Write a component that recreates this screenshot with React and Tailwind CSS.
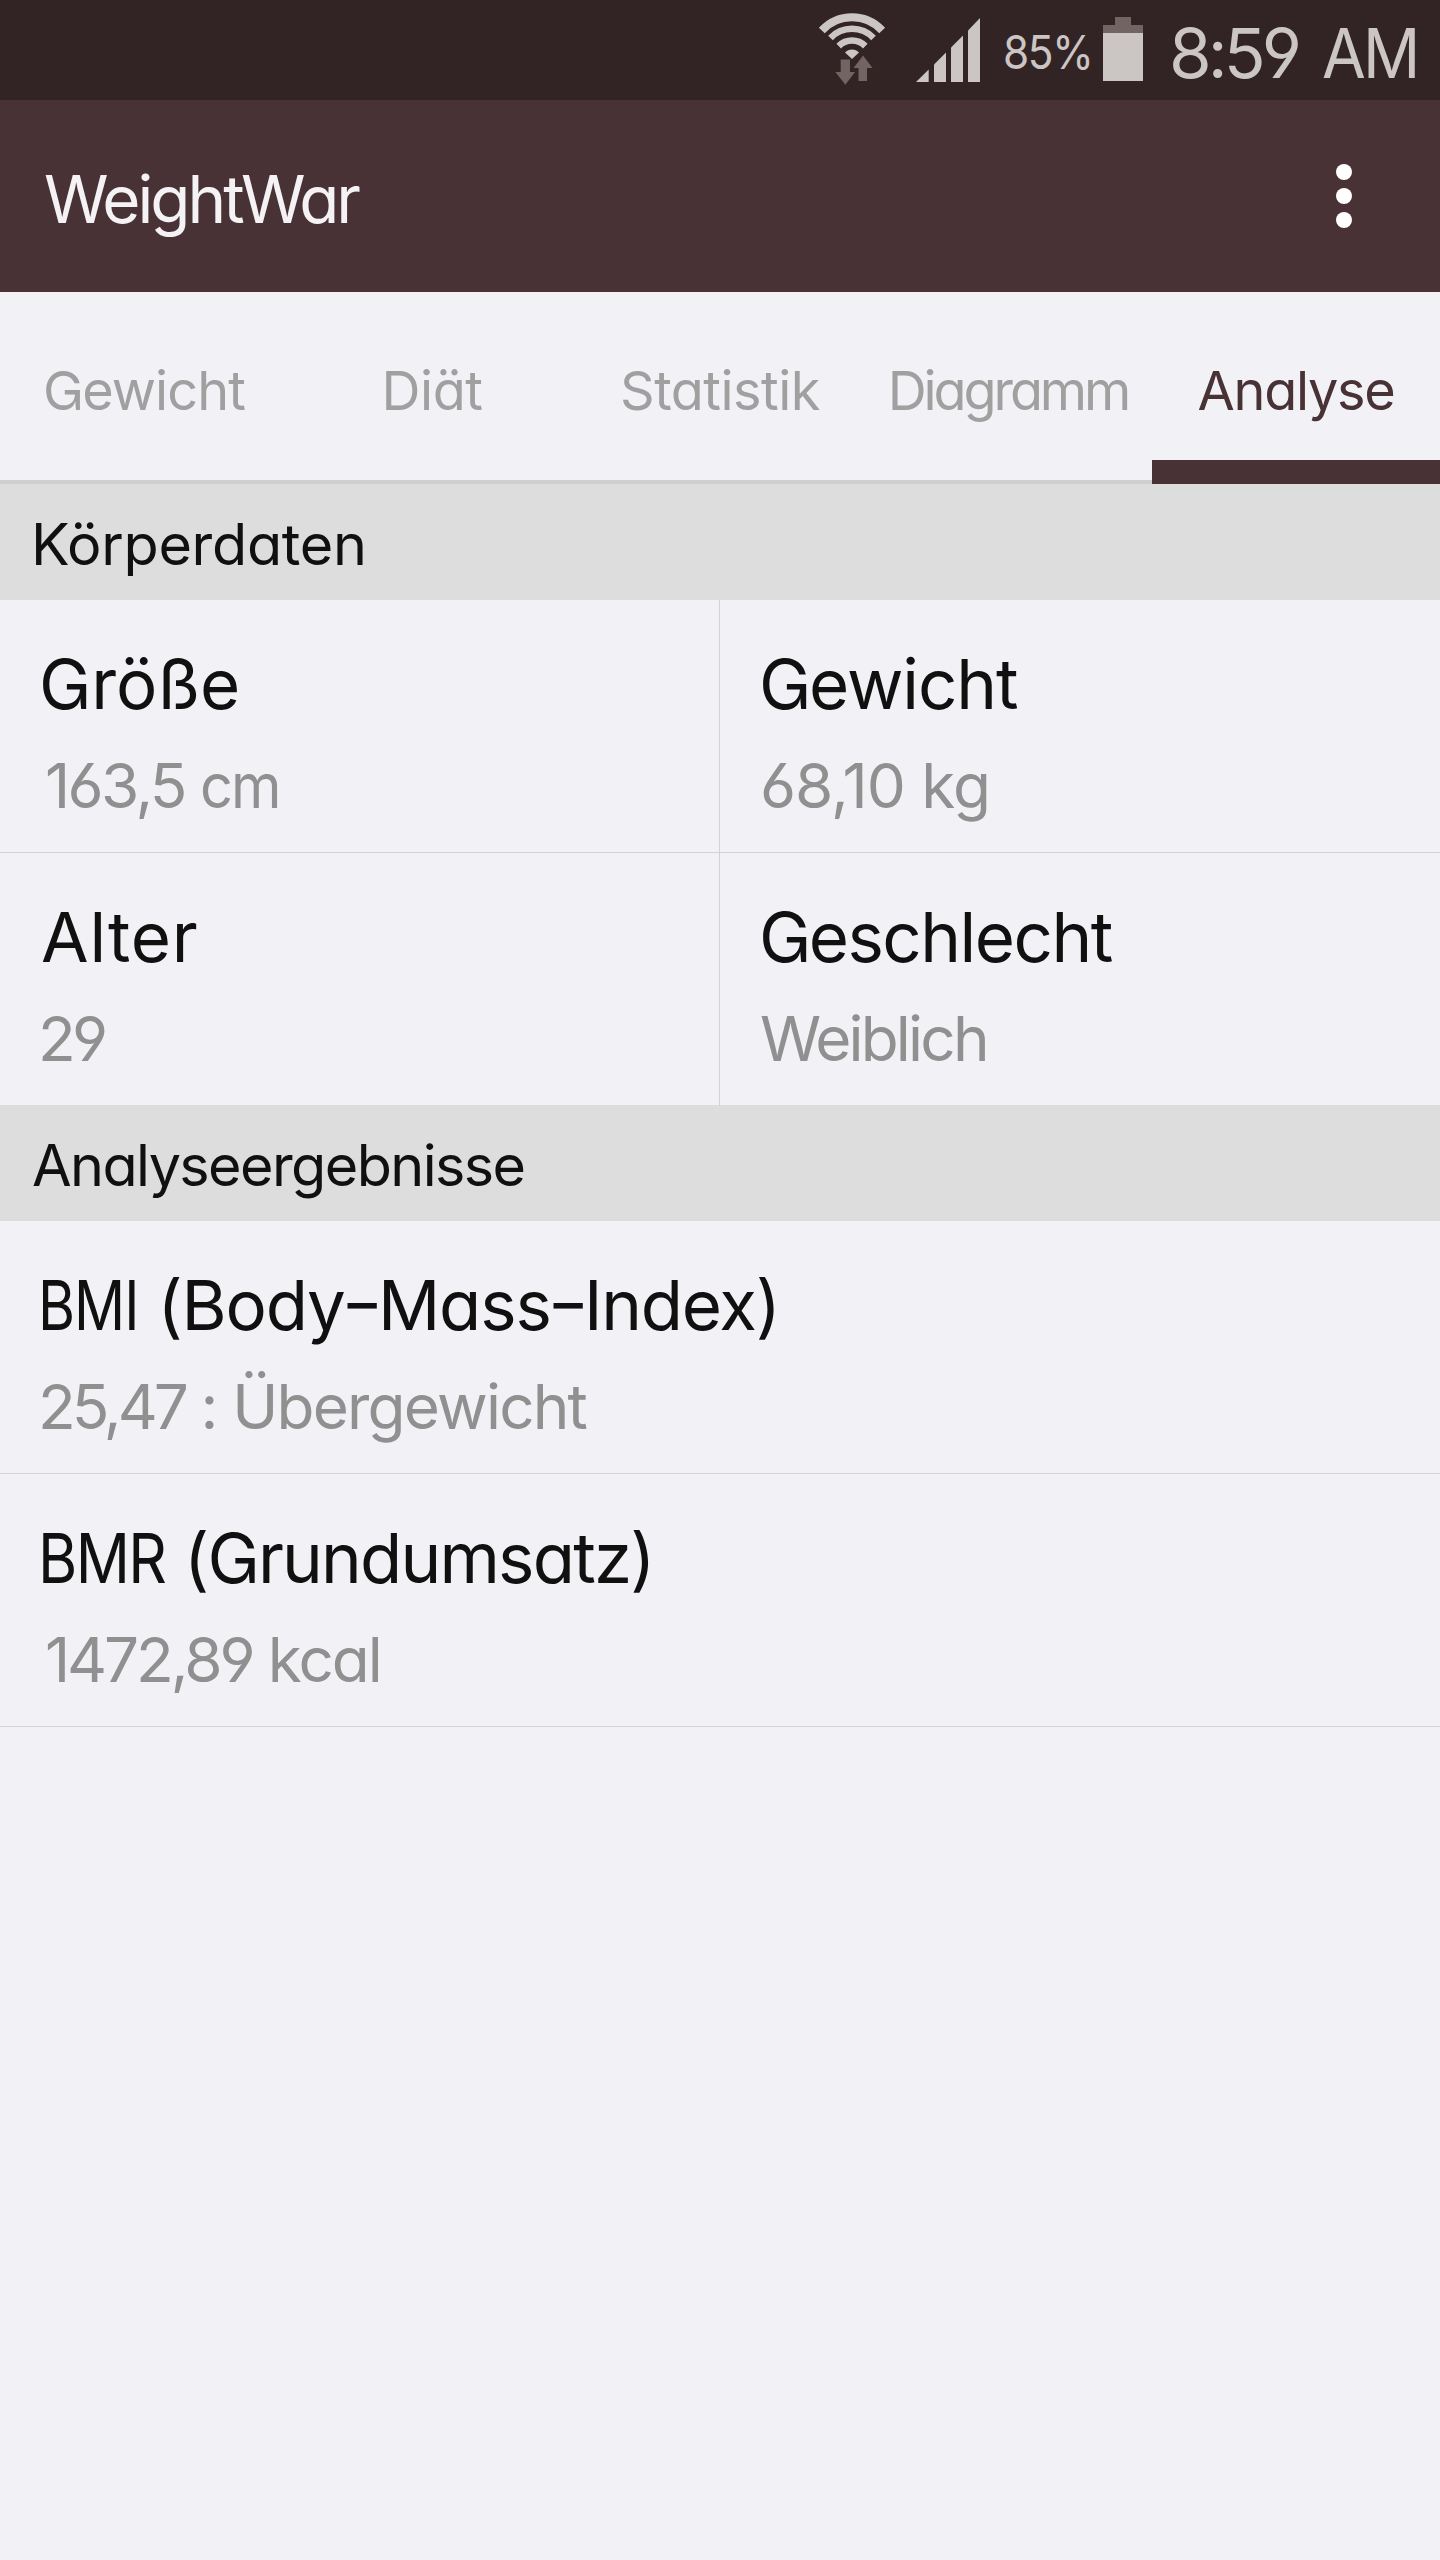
import clsx from "clsx";

const tabs = [
    { label: "Gewicht", className: "tracking-[-0.9px]" },
    { label: "Diät", className: "tracking-[-0.4px]" },
    { label: "Statistik", className: "tracking-[-0.5px]" },
    { label: "Diagramm", className: "tracking-[-3.1px]" },
    { label: "Analyse", className: "tracking-[-1.3px]", active: true },
];

function WifiIcon() {
    return (
        <svg viewBox="815 0 75 100" className="h-[100px] w-[75px] shrink-0">
            <g fill="none" stroke="#cbc5c4">
                <path d="M821.8 30.5A41 41 0 0 1 882.2 30.5" strokeWidth="8" />
                <path d="M830.5 37.9A30 30 0 0 1 873.5 37.9" strokeWidth="6.5" />
                <path d="M838.7 46.1A18.8 18.8 0 0 1 865.3 46.1" strokeWidth="6.5" />
            </g>
            <path d="M852 59L845 52.5A9.5 9.5 0 0 1 859 52.5Z" fill="#cbc5c4" />
            <g fill="#726463">
                <path d="M840.7 59.5H850V72H855L845.4 84.7L835.3 72H840.7Z" />
                <path d="M863 55.5L872.5 68H867V81H858.5V68H853.5Z" />
            </g>
        </svg>
    );
}

function SignalIcon() {
    return (
        <svg viewBox="916 0 64 100" className="ml-[26px] h-[100px] w-[64px] shrink-0" fill="#cbc5c4">
            <path d="M916 82L928.7 69.5V82Z" />
            <path d="M934 82V64.5L946 52.5V82Z" />
            <path d="M951 82V47.5L963 35.5V82Z" />
            <path d="M968 82V30.5L980 18V82Z" />
        </svg>
    );
}

function BatteryIcon() {
    return (
        <svg viewBox="1103 0 40 100" className="ml-3 h-[100px] w-[40px] shrink-0">
            <path d="M1115 17H1131V25H1143V33H1103V25H1115Z" fill="#726463" />
            <path d="M1103 33H1143V81H1103Z" fill="#cbc5c4" />
        </svg>
    );
}

function StatusBar() {
    return (
        <div className="flex h-[100px] items-center bg-[#322424] pl-[815px] text-[#cbc5c4]">
            <WifiIcon />
            <SignalIcon />
            <div className="ml-[23px] w-[88px] shrink-0 pt-1">
                <span className="inline-block origin-left scale-x-90 text-[47px] leading-[60px] tracking-[-1.5px]">85%</span>
            </div>
            <BatteryIcon />
            <div className="ml-[26px] flex whitespace-nowrap pt-1.5 text-[69px] leading-[80px]">
                <span className="w-[153px] tracking-[-3.95px]">8:59</span>
                <span className="origin-left scale-x-[0.92] tracking-[-3px]">AM</span>
            </div>
        </div>
    );
}

function SectionHeader({ children, className }) {
    return (
        <h2 className={clsx("h-[116px] bg-[#dddddd] text-[57.5px] leading-[120px] text-[#101010]", className)}>
            {children}
        </h2>
    );
}

function Dash() {
    return <span className="inline-block -translate-y-[3px] scale-x-[0.85]">–</span>;
}

// titleClass / valueClass carry the inset and letter spacing of each line
function Item({ title, value, titleClass, valueClass, className }) {
    return (
        <div className={clsx("h-[253px] whitespace-nowrap pt-[42px]", className)}>
            <div className={clsx("text-[69px] leading-[84px] text-[#101010]", titleClass)}>{title}</div>
            <div className={clsx("mt-[22px] text-[62px] leading-[76px] text-[#909090]", valueClass)}>{value}</div>
        </div>
    );
}

export default function App() {
    return (
        <div className="min-h-[2560px] w-[1440px] overflow-hidden bg-[#f2f1f5] font-['Inter',sans-serif] [font-feature-settings:'cv11','cv03','cv04','cv10']">
            <StatusBar />

            {/* App bar */}
            <header className="flex h-[192px] items-center justify-between bg-[#483235] pl-[44px] pr-[88px]">
                <h1 className="pt-2 text-[65.5px] leading-[80px] tracking-[-3px] text-[#f4f2f5]">WeightWar</h1>
                <button className="flex flex-col gap-2">
                    <span className="size-4 rounded-full bg-white" />
                    <span className="size-4 rounded-full bg-white" />
                    <span className="size-4 rounded-full bg-white" />
                </button>
            </header>

            {/* Tabs */}
            <nav className="grid h-[192px] grid-cols-5 text-center text-[54px] leading-[64px]">
                {tabs.map((t) => (
                    <div
                        key={t.label}
                        className={clsx(
                            "pt-[67px]",
                            t.active ? "border-b-[24px] border-[#483235] text-[#483235]" : "border-b-4 border-[#cfcfcf] text-[#a0a0a0]",
                            t.className
                        )}
                    >
                        {t.label}
                    </div>
                ))}
            </nav>

            <SectionHeader className="pl-[31px] tracking-[-0.3px]">Körperdaten</SectionHeader>
            <div className="grid grid-cols-2">
                <Item
                    title="Größe"
                    value={<><span className="tracking-[-2.6px]">163,5</span> <span className="inline-block origin-left scale-x-[0.93]">cm</span></>}
                    className="border-r border-b border-[#d3d3d7]"
                    titleClass="pl-[39px]"
                    valueClass="pl-[45px] tracking-[-2px]"
                />
                <Item title="Gewicht" value="68,10 kg" className="border-b border-[#d3d3d7]"
                    titleClass="pl-[39px] tracking-[-1.1px]" valueClass="pl-[40px] tracking-[-1px]" />
                <Item title="Alter" value="29" className="border-r border-[#d3d3d7]"
                    titleClass="pl-[41px] tracking-[0.8px]" valueClass="pl-[38px] tracking-[-3.9px]" />
                <Item title="Geschlecht" value="Weiblich"
                    titleClass="pl-[39px] tracking-[-1.5px]" valueClass="pl-[40px] tracking-[-2.8px]" />
            </div>

            <SectionHeader className="-mt-px pl-[32px] tracking-[-1.6px]">Analyseergebnisse</SectionHeader>
            <Item
                title={<><span className="mr-[-21px] inline-block origin-left scale-x-[0.82]">BMI</span> (Body<Dash />Mass<Dash />Index)</>}
                value={<><span className="tracking-[-4px]">25,47</span> : Übergewicht</>}
                className="border-b border-[#d3d3d7]"
                titleClass="pl-[38px] tracking-[-1.2px]"
                valueClass="pl-[38px] tracking-[-1.8px]"
            />
            <Item
                title={<><span className="mr-[-18px] inline-block origin-left scale-x-[0.87]">BMR</span> (Grundumsatz)</>}
                value={<><span className="tracking-[-3.1px]">1472,89</span> kcal</>}
                className="border-b border-[#d3d3d7]"
                titleClass="pl-[38px] tracking-[-1.8px]"
                valueClass="pl-[45px] tracking-[-2px]"
            />
        </div>
    );
}
